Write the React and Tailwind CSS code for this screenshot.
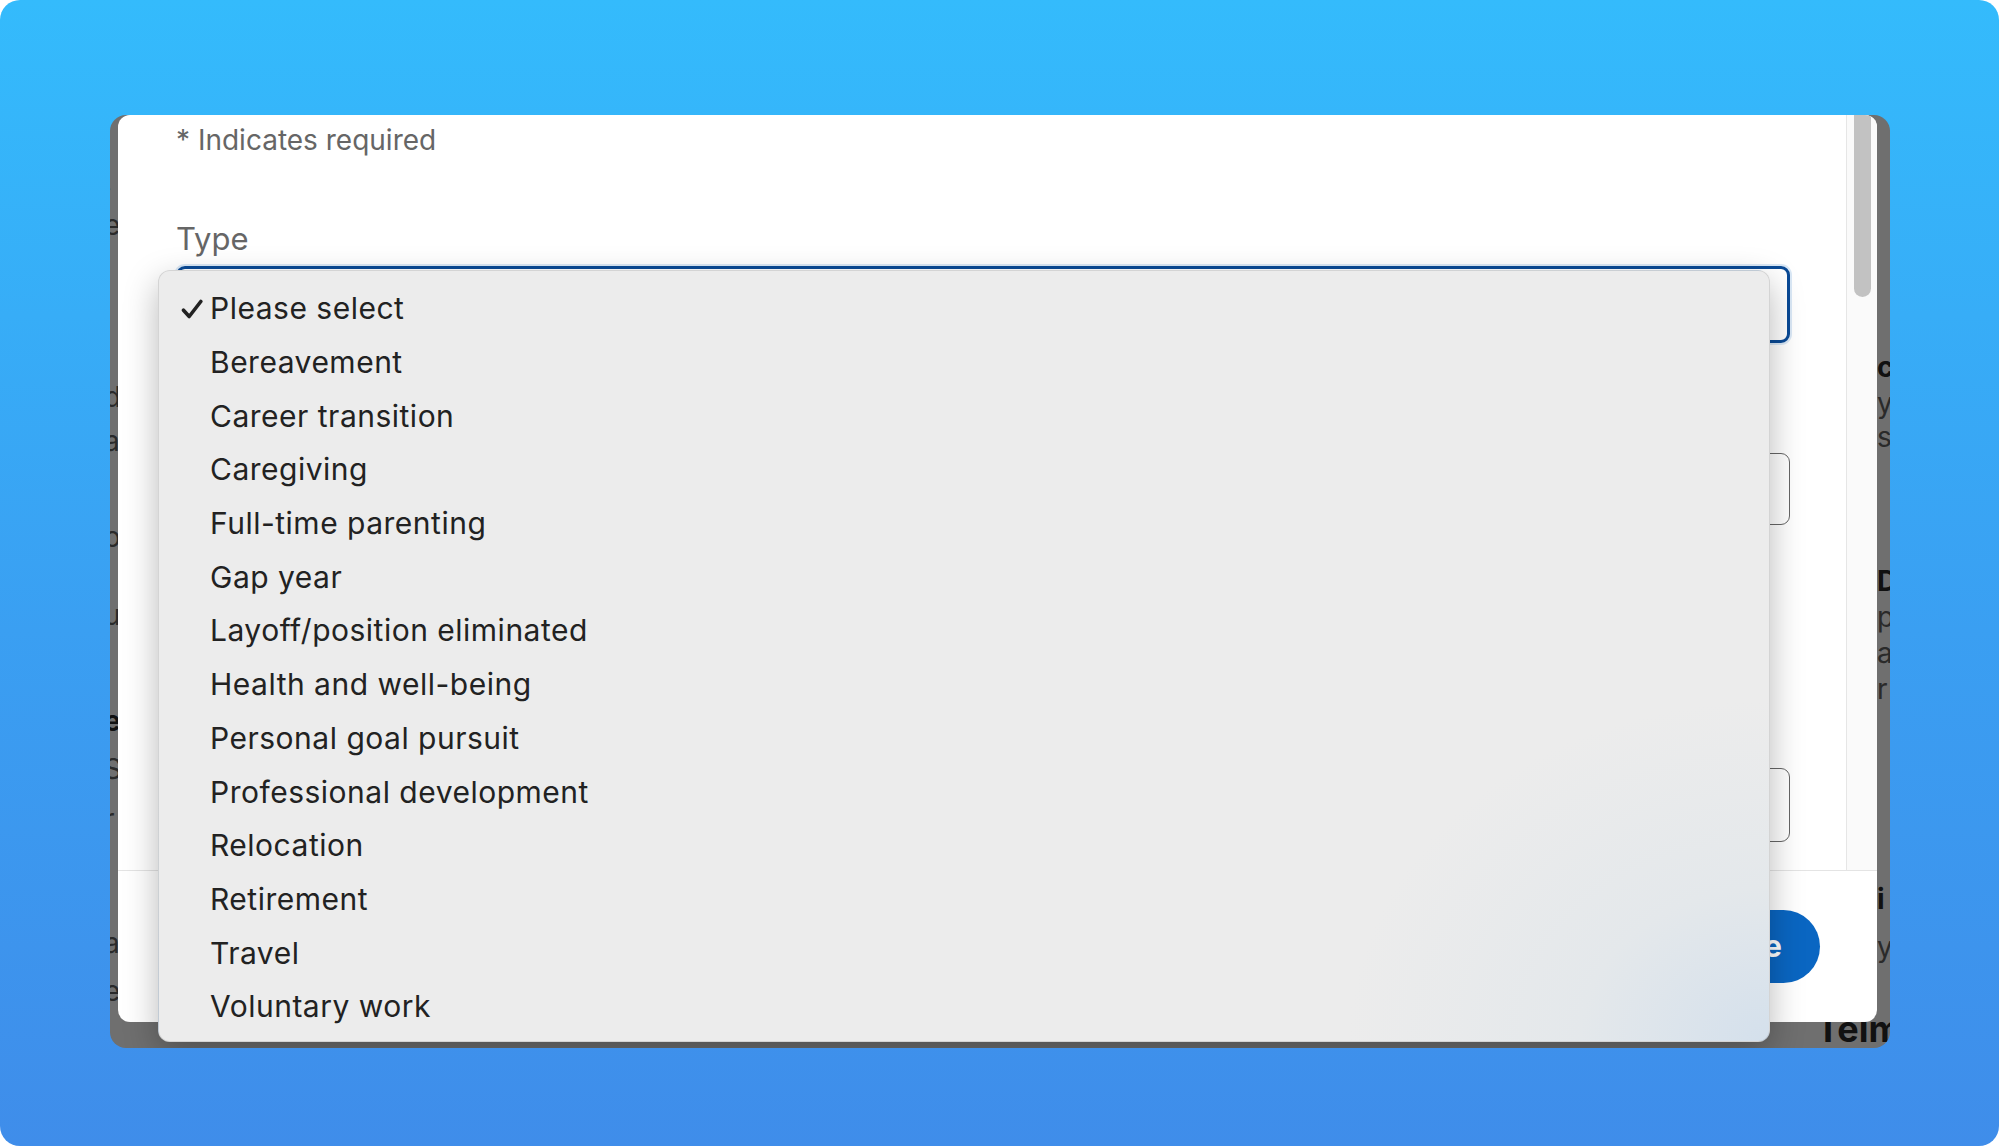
const options = [
  "Please select",
  "Bereavement",
  "Career transition",
  "Caregiving",
  "Full-time parenting",
  "Gap year",
  "Layoff/position eliminated",
  "Health and well-being",
  "Personal goal pursuit",
  "Professional development",
  "Relocation",
  "Retirement",
  "Travel",
  "Voluntary work",
];

// bits of the dimmed page that peek out around the dialog
const leftBits = [
  { t: ".", y: 52, b: false },
  { t: "e", y: 96, b: false },
  { t: "d", y: 268, b: false },
  { t: "a", y: 312, b: false },
  { t: "o", y: 408, b: false },
  { t: "u", y: 486, b: false },
  { t: "e", y: 592, b: true },
  { t: "S", y: 640, b: false },
  { t: "r", y: 690, b: false },
  { t: "a", y: 814, b: false },
  { t: "e", y: 862, b: false },
];

const rightBits = [
  { t: "c", y: 238, b: true },
  { t: "y", y: 274, b: false },
  { t: "s", y: 308, b: false },
  { t: "D", y: 452, b: true },
  { t: "p", y: 488, b: false },
  { t: "a", y: 524, b: false },
  { t: "r", y: 560, b: false },
  { t: "i", y: 770, b: true },
  { t: "y", y: 818, b: false },
];

function Check() {
  return (
    <svg viewBox="0 0 22 20" className="h-[20px] w-[22px] shrink-0" fill="none" aria-hidden="true">
      <path d="M2.5 11.2 L8.2 17.5 L19.8 2.5" stroke="#222" strokeWidth="3.6" strokeLinecap="round" strokeLinejoin="round" />
    </svg>
  );
}

export default function App() {
  return (
    <main className="h-[1146px] w-[1999px] overflow-hidden bg-white font-[Inter,sans-serif]">
      <div className="h-full w-full rounded-[20px] bg-[linear-gradient(180deg,#34bbfc_0%,#3a9ff2_55%,#3f8dea_100%)] pl-[110px] pt-[115px]">
        <div className="relative h-[933px] w-[1780px] overflow-hidden rounded-[16px] bg-[#6f6f6f]">
          {leftBits.map((b, i) => (
            <span
              key={"l" + i}
              className={"absolute left-[-6px] text-[28px] leading-none " + (b.b ? "font-bold text-[#111]" : "text-[#2a2a2a]")}
              style={{ top: b.y }}
            >
              {b.t}
            </span>
          ))}
          {rightBits.map((b, i) => (
            <span
              key={"r" + i}
              className={"absolute left-[1767px] text-[28px] leading-none " + (b.b ? "font-bold text-[#111]" : "text-[#2a2a2a]")}
              style={{ top: b.y }}
            >
              {b.t}
            </span>
          ))}
          <span className="absolute left-[1706px] top-[896px] text-[36px] font-bold leading-none text-[#111]">Telm</span>

          {/* dialog */}
          <div className="relative ml-[8px] flex h-[907px] w-[1759px] flex-col overflow-hidden rounded-[12px] bg-white">
            <div className="flex h-[755px]">
              <div className="flex-1 pl-[58px] pr-[56px]">
                <p className="mt-[7px] text-[28px] leading-[36px] text-[#666]">* Indicates required</p>
                <p className="mt-[61px] text-[31px] leading-[40px] text-[#666]">Type</p>
                <div className="mt-[7px] h-[77px] rounded-[9px] border-[3px] border-[#0a4a96] shadow-[0_0_0_2px_rgba(10,102,194,0.15)]" />
                <div className="mt-[110px] h-[72px] rounded-[9px] border border-[#666]" />
                <div className="mt-[243px] h-[74px] rounded-[9px] border border-[#666]" />
              </div>
              <div className="w-[31px] border-l border-[#e6e6e6] bg-[#fafafa]">
                <div className="ml-[7px] h-[182px] w-[17px] rounded-b-full bg-[#c2c2c2]" />
              </div>
            </div>
            <div className="h-px bg-[#e4e4e4]" />
            <div className="flex flex-1 items-center justify-end pr-[57px]">
              <button className="h-[73px] rounded-full bg-[#0a66c2] px-[38px] text-[30px] font-bold text-white">
                Save
              </button>
            </div>
          </div>

          {/* native select popup */}
          <ul className="absolute left-[48px] top-[155px] h-[772px] w-[1612px] rounded-[12px] border border-black/10 bg-[radial-gradient(ellipse_420px_340px_at_100%_100%,#d4e0ec_0%,#e4e8eb_45%,#ececec_100%)] pl-[22px] pt-[11px] shadow-[0_12px_34px_rgba(0,0,0,0.28)]">
            {options.map((o, i) => (
              <li key={o} className="flex h-[53.7px] items-center gap-[7px] text-[30px] tracking-[0.5px] text-[#222]">
                {i === 0 ? <Check /> : <span className="w-[22px] shrink-0" />}
                <span>{o}</span>
              </li>
            ))}
          </ul>
        </div>
      </div>
    </main>
  );
}
